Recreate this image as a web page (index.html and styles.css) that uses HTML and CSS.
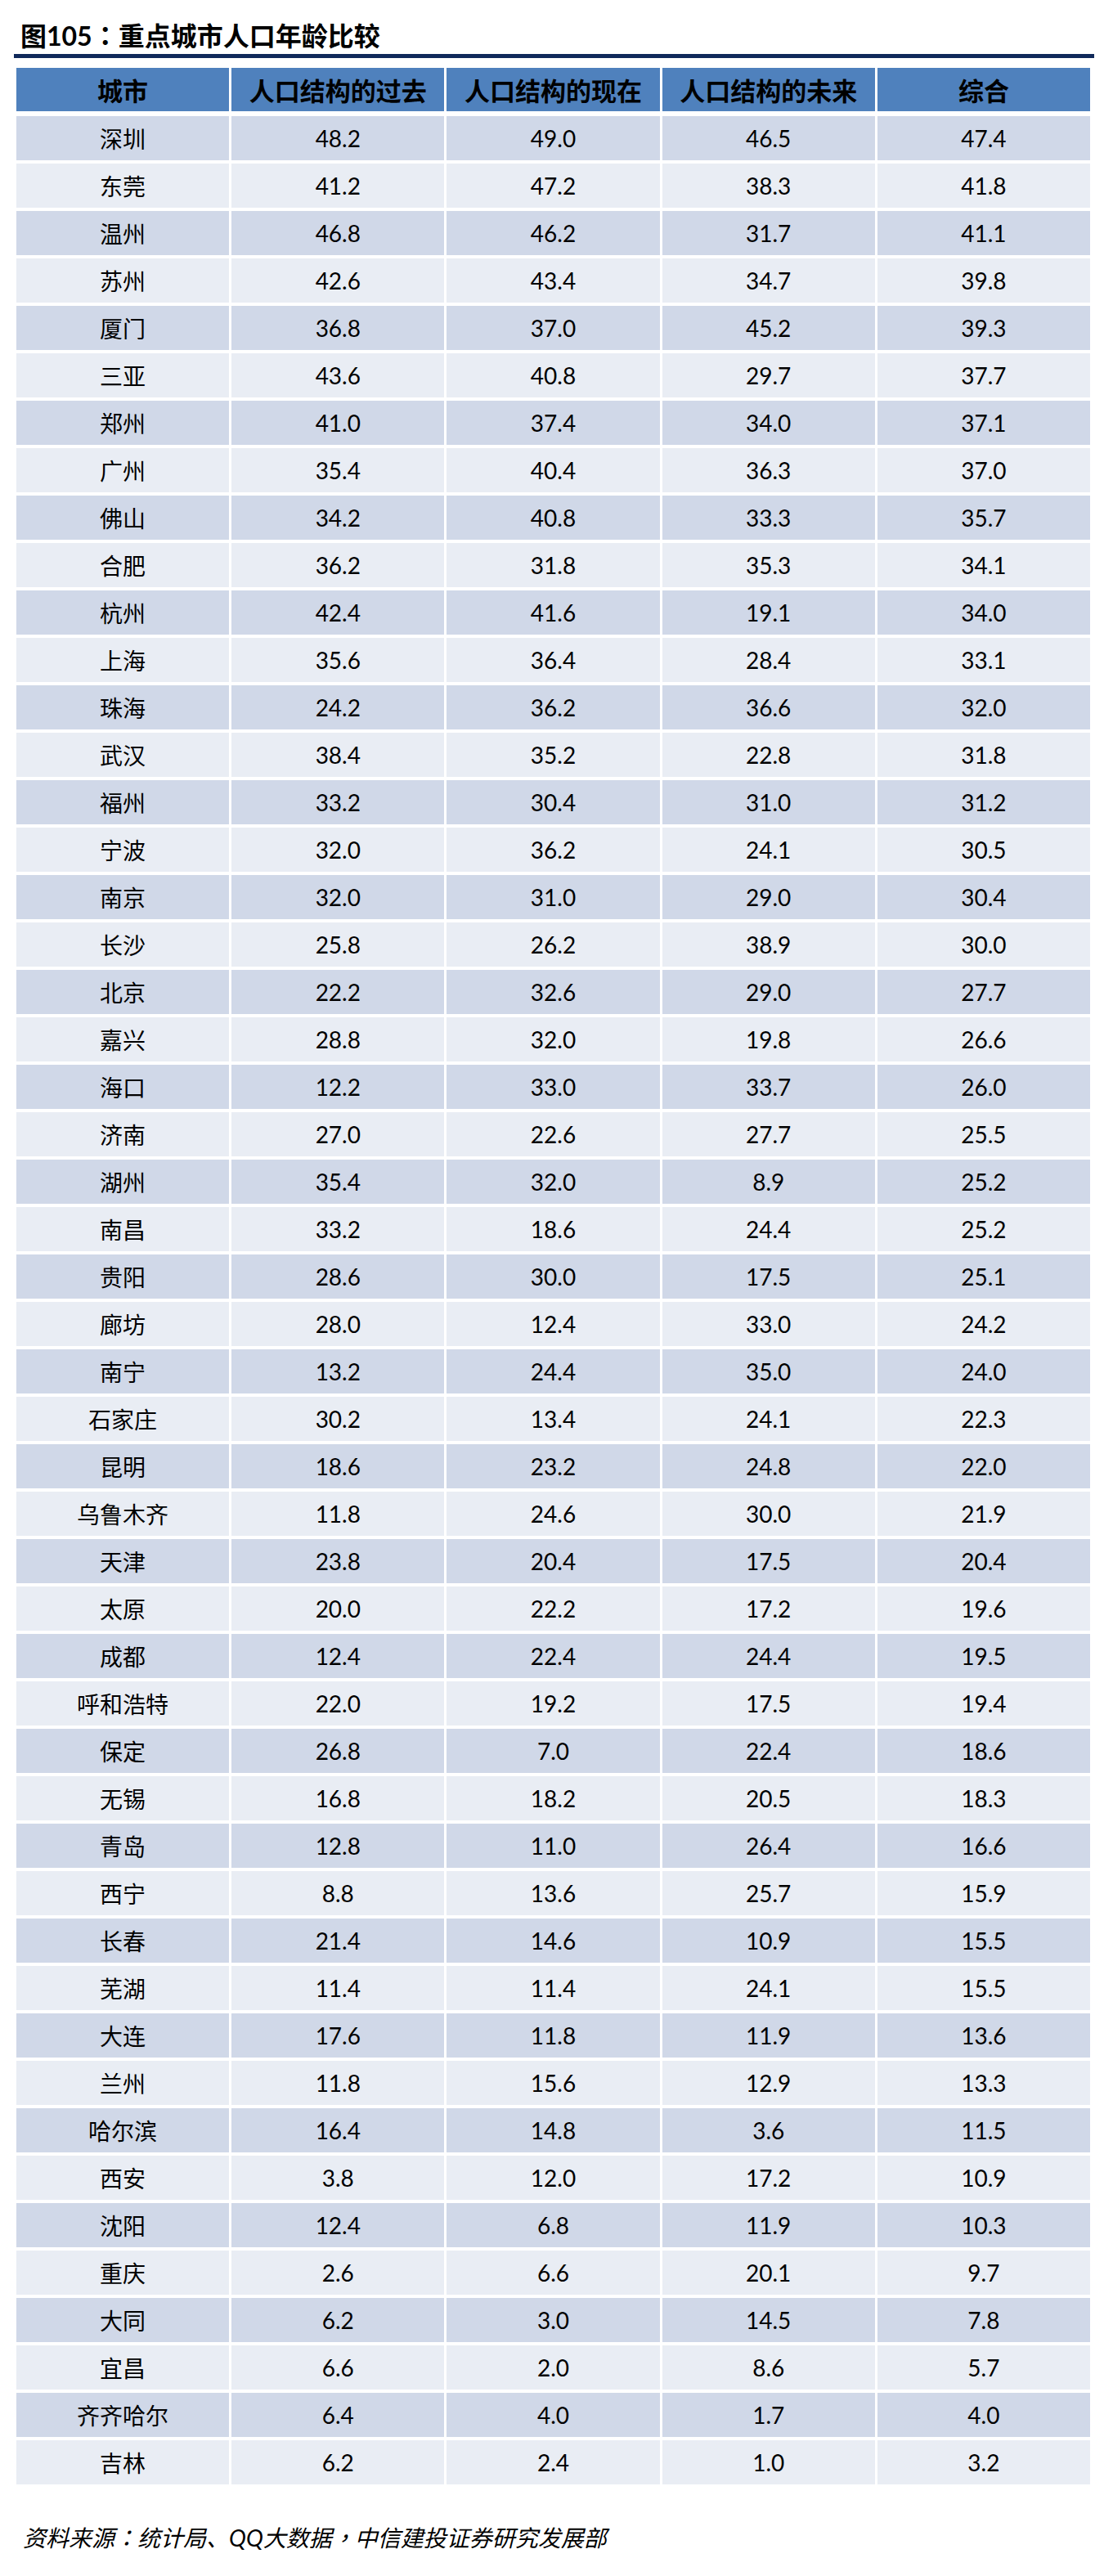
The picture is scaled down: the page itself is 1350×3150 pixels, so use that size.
FILE: index.html
```html
<!DOCTYPE html>
<html lang="zh-CN">
<head>
<meta charset="utf-8">
<title>重点城市人口年龄比较</title>
<link rel="stylesheet" href="styles.css">
</head>
<body>
<div class="page">
  <h1 class="title">图105<span class="punct" lang="zh-TW">：</span>重点城市人口年龄比较</h1>
  <div class="rule"></div>
  <div class="table">
    <div class="row head"><div>城市</div><div>人口结构的过去</div><div>人口结构的现在</div><div>人口结构的未来</div><div>综合</div></div>
    <div class="body">
      <div class="row"><div>深圳</div><div>48.2</div><div>49.0</div><div>46.5</div><div>47.4</div></div>
      <div class="row"><div>东莞</div><div>41.2</div><div>47.2</div><div>38.3</div><div>41.8</div></div>
      <div class="row"><div>温州</div><div>46.8</div><div>46.2</div><div>31.7</div><div>41.1</div></div>
      <div class="row"><div>苏州</div><div>42.6</div><div>43.4</div><div>34.7</div><div>39.8</div></div>
      <div class="row"><div>厦门</div><div>36.8</div><div>37.0</div><div>45.2</div><div>39.3</div></div>
      <div class="row"><div>三亚</div><div>43.6</div><div>40.8</div><div>29.7</div><div>37.7</div></div>
      <div class="row"><div>郑州</div><div>41.0</div><div>37.4</div><div>34.0</div><div>37.1</div></div>
      <div class="row"><div>广州</div><div>35.4</div><div>40.4</div><div>36.3</div><div>37.0</div></div>
      <div class="row"><div>佛山</div><div>34.2</div><div>40.8</div><div>33.3</div><div>35.7</div></div>
      <div class="row"><div>合肥</div><div>36.2</div><div>31.8</div><div>35.3</div><div>34.1</div></div>
      <div class="row"><div>杭州</div><div>42.4</div><div>41.6</div><div>19.1</div><div>34.0</div></div>
      <div class="row"><div>上海</div><div>35.6</div><div>36.4</div><div>28.4</div><div>33.1</div></div>
      <div class="row"><div>珠海</div><div>24.2</div><div>36.2</div><div>36.6</div><div>32.0</div></div>
      <div class="row"><div>武汉</div><div>38.4</div><div>35.2</div><div>22.8</div><div>31.8</div></div>
      <div class="row"><div>福州</div><div>33.2</div><div>30.4</div><div>31.0</div><div>31.2</div></div>
      <div class="row"><div>宁波</div><div>32.0</div><div>36.2</div><div>24.1</div><div>30.5</div></div>
      <div class="row"><div>南京</div><div>32.0</div><div>31.0</div><div>29.0</div><div>30.4</div></div>
      <div class="row"><div>长沙</div><div>25.8</div><div>26.2</div><div>38.9</div><div>30.0</div></div>
      <div class="row"><div>北京</div><div>22.2</div><div>32.6</div><div>29.0</div><div>27.7</div></div>
      <div class="row"><div>嘉兴</div><div>28.8</div><div>32.0</div><div>19.8</div><div>26.6</div></div>
      <div class="row"><div>海口</div><div>12.2</div><div>33.0</div><div>33.7</div><div>26.0</div></div>
      <div class="row"><div>济南</div><div>27.0</div><div>22.6</div><div>27.7</div><div>25.5</div></div>
      <div class="row"><div>湖州</div><div>35.4</div><div>32.0</div><div>8.9</div><div>25.2</div></div>
      <div class="row"><div>南昌</div><div>33.2</div><div>18.6</div><div>24.4</div><div>25.2</div></div>
      <div class="row"><div>贵阳</div><div>28.6</div><div>30.0</div><div>17.5</div><div>25.1</div></div>
      <div class="row"><div>廊坊</div><div>28.0</div><div>12.4</div><div>33.0</div><div>24.2</div></div>
      <div class="row"><div>南宁</div><div>13.2</div><div>24.4</div><div>35.0</div><div>24.0</div></div>
      <div class="row"><div>石家庄</div><div>30.2</div><div>13.4</div><div>24.1</div><div>22.3</div></div>
      <div class="row"><div>昆明</div><div>18.6</div><div>23.2</div><div>24.8</div><div>22.0</div></div>
      <div class="row"><div>乌鲁木齐</div><div>11.8</div><div>24.6</div><div>30.0</div><div>21.9</div></div>
      <div class="row"><div>天津</div><div>23.8</div><div>20.4</div><div>17.5</div><div>20.4</div></div>
      <div class="row"><div>太原</div><div>20.0</div><div>22.2</div><div>17.2</div><div>19.6</div></div>
      <div class="row"><div>成都</div><div>12.4</div><div>22.4</div><div>24.4</div><div>19.5</div></div>
      <div class="row"><div>呼和浩特</div><div>22.0</div><div>19.2</div><div>17.5</div><div>19.4</div></div>
      <div class="row"><div>保定</div><div>26.8</div><div>7.0</div><div>22.4</div><div>18.6</div></div>
      <div class="row"><div>无锡</div><div>16.8</div><div>18.2</div><div>20.5</div><div>18.3</div></div>
      <div class="row"><div>青岛</div><div>12.8</div><div>11.0</div><div>26.4</div><div>16.6</div></div>
      <div class="row"><div>西宁</div><div>8.8</div><div>13.6</div><div>25.7</div><div>15.9</div></div>
      <div class="row"><div>长春</div><div>21.4</div><div>14.6</div><div>10.9</div><div>15.5</div></div>
      <div class="row"><div>芜湖</div><div>11.4</div><div>11.4</div><div>24.1</div><div>15.5</div></div>
      <div class="row"><div>大连</div><div>17.6</div><div>11.8</div><div>11.9</div><div>13.6</div></div>
      <div class="row"><div>兰州</div><div>11.8</div><div>15.6</div><div>12.9</div><div>13.3</div></div>
      <div class="row"><div>哈尔滨</div><div>16.4</div><div>14.8</div><div>3.6</div><div>11.5</div></div>
      <div class="row"><div>西安</div><div>3.8</div><div>12.0</div><div>17.2</div><div>10.9</div></div>
      <div class="row"><div>沈阳</div><div>12.4</div><div>6.8</div><div>11.9</div><div>10.3</div></div>
      <div class="row"><div>重庆</div><div>2.6</div><div>6.6</div><div>20.1</div><div>9.7</div></div>
      <div class="row"><div>大同</div><div>6.2</div><div>3.0</div><div>14.5</div><div>7.8</div></div>
      <div class="row"><div>宜昌</div><div>6.6</div><div>2.0</div><div>8.6</div><div>5.7</div></div>
      <div class="row"><div>齐齐哈尔</div><div>6.4</div><div>4.0</div><div>1.7</div><div>4.0</div></div>
      <div class="row"><div>吉林</div><div>6.2</div><div>2.4</div><div>1.0</div><div>3.2</div></div>
    </div>
  </div>
  <p class="source">资料来源<span class="punct" lang="zh-TW">：</span>统计局、QQ大数据<span class="punct" lang="zh-TW">，</span>中信建投证券研究发展部</p>
</div>
</body>
</html>
```

FILE: styles.css
```css
html, body {
  margin: 0;
  padding: 0;
  background: #ffffff;
}

.page {
  font-family: "Lato", "Noto Sans CJK SC", sans-serif;
  color: #000000;
  padding-top: 22px;
}

.title {
  margin: 0 0 2px 25px;
  font-size: 32px;
  line-height: 40px;
  font-weight: 700;
  color: #000000;
}

.punct {
  font-family: "Noto Sans CJK TC", "Noto Sans CJK SC", sans-serif;
}

.rule {
  margin-left: 17px;
  width: 1321px;
  height: 5px;
  background: #10295a;
}

.table {
  margin: 12px 0 0 20px;
  width: 1313px;
}

.row {
  display: grid;
  grid-template-columns: repeat(5, 1fr);
  column-gap: 3px;
}

.row > div {
  display: flex;
  align-items: center;
  justify-content: center;
  height: 54px;
  font-size: 28px;
}

.head > div {
  height: 53px;
  background: #4f81bd;
  font-size: 31px;
  font-weight: 700;
}

.body {
  margin-top: 6px;
  display: flex;
  flex-direction: column;
  gap: 4px;
}

.body .row:nth-child(odd) > div {
  background: #d0d8e8;
}

.body .row:nth-child(even) > div {
  background: #e9edf4;
}

.source {
  margin: 46px 0 0 28px;
  font-size: 28px;
  line-height: 36px;
  font-style: italic;
}
```
